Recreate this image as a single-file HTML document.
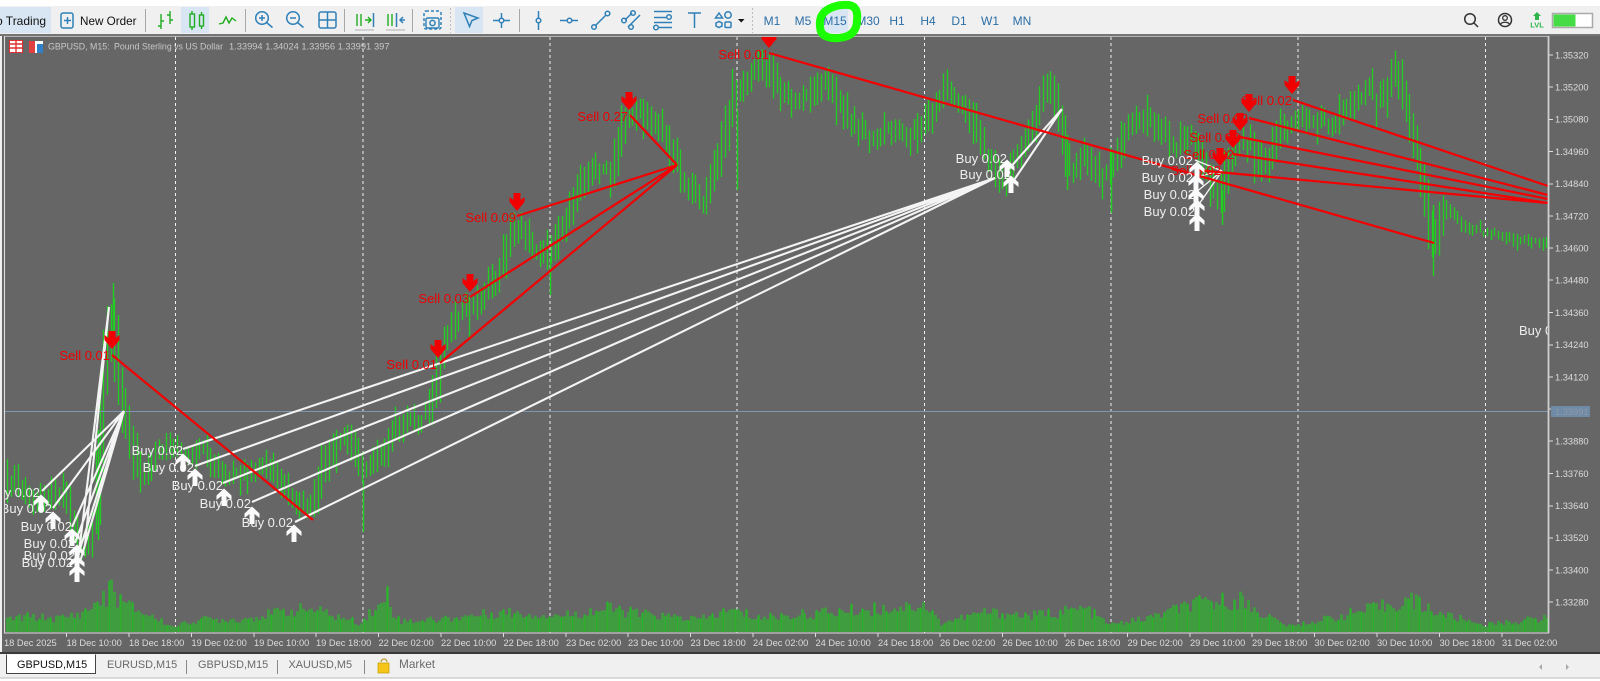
<!DOCTYPE html>
<html><head><meta charset="utf-8"><title>MT5 GBPUSD M15</title>
<style>
html,body{margin:0;padding:0;background:#fff;width:1600px;height:681px;overflow:hidden}
svg{display:block;position:absolute;left:0;top:0}
text{font-family:"Liberation Sans",sans-serif}
.tb{font-size:11.700px;fill:#111}
.tf{font-size:12px;fill:#2c6ea6;text-anchor:middle}
.ax{font-size:9.300px;fill:#dcdcdc}
.hd{font-size:8.800px;fill:#c8c8c8}
.s{font-size:13px;fill:#f00000;text-anchor:end}
.b{font-size:13px;fill:#eeeeee;text-anchor:end}
.tab{font-size:10.900px;fill:#6a6a6a}
.i{fill:none;stroke:#2f80b8;stroke-width:1.5}
.g{fill:none;stroke:#20ad20;stroke-width:1.4}
.w{fill:none;stroke:#f4f4f4;stroke-width:2.100}
.r{fill:none;stroke:#f40000;stroke-width:2.200}
</style></head><body>
<svg width="1600" height="681" viewBox="0 0 1600 681" xmlns="http://www.w3.org/2000/svg">
<defs>
<clipPath id="c"><rect x="5" y="37" width="1543" height="596"/></clipPath>
<path id="ad" fill="#f00000" d="M-3.500-9H3.500V-2L7.500-5V0L0 9-7.500 0V-5L-3.500-2Z"/>
<path id="au" fill="#fafafa" d="M-2.500 9H2.500V-1L7.500 3V-1.500L0-8.500-7.500-1.500V3L-2.500-1Z"/>
</defs>
<rect width="1600" height="681" fill="#fff"/>
<rect y="6" width="1600" height="28" fill="#f0f0f0"/>
<rect x="0" y="34" width="1600" height="620" fill="#666"/>
<rect x="0" y="34" width="2" height="620" fill="#f0f0f0"/>
<rect y="34" width="1600" height="2" fill="#757575"/>
<rect y="654" width="1600" height="24" fill="#f0f0f0"/>
<rect y="652" width="1600" height="2" fill="#3a3a3a"/>
<rect y="677.500" width="1600" height="1" fill="#bbb"/>

<!-- toolbar -->
<rect x="0" y="7" width="51" height="26" fill="#d8e6f3"/>
<text x="-22" y="25" class="tb" style="font-size:12px">Auto Trading</text>
<rect x="61" y="13" width="12" height="15" rx="2" class="i"/>
<path d="M64 20.500h7M67.500 17v7" class="i" stroke-width="1.300"/>
<text x="80" y="25" class="tb">New Order</text>
<path d="M145.500 9v23M245.500 9v23M344.500 9v23M412.500 9v23M519.500 9v23" stroke="#a8a8a8"/>
<path d="M450.500 8v25M752.500 8v25" stroke="#bbb" stroke-dasharray="2 2"/>

<path d="M161 14v15M158 26h3M161 21h3M170 11v13M167 15h3M170 20h3" class="g"/>
<rect x="181" y="7" width="28" height="26" fill="#d8e6f3"/>
<path d="M192 11v3M192 27v3M201.500 12v3M201.500 26v3" class="g"/>
<rect x="190" y="14" width="4.500" height="13" class="g"/><rect x="199.500" y="15" width="4" height="11" class="g"/>
<path d="M219 24l4-1 3-6 3 6 3-5 4 3" class="g"/>
<circle cx="262" cy="18" r="6.300" class="i"/><path d="M266.500 22.500l6 5M259 18h6M262 15v6" class="i"/>
<circle cx="293" cy="18" r="6.300" class="i"/><path d="M297.500 22.500l6 5M290 18h6" class="i"/>
<rect x="319" y="12" width="17" height="16" rx="2" class="i" stroke-width="1.800"/><path d="M327.500 12v16M319 20h17" class="i" stroke-width="1.800"/>
<path d="M357 14v12M361 14v12" class="g" stroke-width="2.400"/><path d="M365 20h5M368 17l3 3-3 3" class="g"/><path d="M373.500 13v14" stroke="#2f80b8" stroke-width="1.500"/><path d="M355 30h19" stroke="#b0b0b0"/>
<path d="M388 14v12M392 14v12" class="g" stroke-width="2.400"/><path d="M396.500 13v14" stroke="#2f80b8" stroke-width="1.500"/><path d="M405 20h-5M403 17l-3 3 3 3" class="i"/><path d="M386 30h19" stroke="#b0b0b0"/>
<rect x="424" y="11" width="17" height="18" rx="2" fill="none" stroke="#2f80b8" stroke-width="1.500" stroke-dasharray="3 2"/>
<rect x="426" y="18" width="13" height="10" rx="1.500" fill="#f0f0f0" stroke="#2f80b8" stroke-width="1.400"/><circle cx="432.500" cy="23" r="2.600" class="i"/>
<rect x="455" y="7" width="28" height="26" fill="#d8e6f3"/>
<path d="M464 13l14 5-6 2.500-2.500 6z" class="i" stroke-width="1.600"/>
<circle cx="501.500" cy="20.500" r="2.300" class="i"/><path d="M493 20.500h6M504 20.500h6M501.500 13v5M501.500 23v5" class="i"/>
<path d="M538.500 11v7M538.500 23v7" class="i"/><circle cx="538.500" cy="20.500" r="2.300" class="i"/>
<path d="M560 20.500h7M572 20.500h6" class="i"/><circle cx="569.500" cy="20.500" r="2.300" class="i"/>
<path d="M595 26l11-11" class="i"/><circle cx="594" cy="27" r="2.300" class="i"/><circle cx="607.500" cy="13.500" r="2.300" class="i"/>
<path d="M625 20l7-7M628 27l12-12" class="i"/><circle cx="624" cy="20.500" r="2.300" class="i"/><circle cx="633" cy="13" r="2.300" class="i"/><circle cx="631" cy="27" r="2.300" class="i"/>
<path d="M654 11.500h18M654 17.500h12M654 22.500h18M659 27.500h13" class="i"/><circle cx="669" cy="17" r="2.300" class="i"/><circle cx="656" cy="27.500" r="2.300" class="i"/>
<path d="M688 13h13M694.500 13v15" class="i"/>
<path d="M719 13l3.500 5h-7z" class="i" stroke-width="1.200"/><circle cx="728" cy="15" r="3.200" class="i" stroke-width="1.200"/><path d="M716 23l3-1.500 3 1.500v3l-3 1.500-3-1.500z" class="i" stroke-width="1.200"/><rect x="725" y="22" width="6" height="5.500" rx="1" class="i" stroke-width="1.200"/>
<path d="M738 19h6.500l-3.200 3.500z" fill="#111"/>

<rect x="821" y="7" width="27" height="26" fill="#d8e6f3"/>
<text x="772" y="25" class="tf">M1</text><text x="803" y="25" class="tf">M5</text><text x="835" y="25" class="tf">M15</text><text x="868" y="25" class="tf">M30</text><text x="897" y="25" class="tf">H1</text><text x="928" y="25" class="tf">H4</text><text x="959" y="25" class="tf">D1</text><text x="990" y="25" class="tf">W1</text><text x="1022" y="25" class="tf">MN</text>

<!-- right icons -->
<circle cx="1470" cy="19" r="5.300" fill="none" stroke="#333" stroke-width="1.500"/><path d="M1474 23l4 4" stroke="#333" stroke-width="1.500"/>
<circle cx="1505" cy="20" r="6.500" fill="none" stroke="#333" stroke-width="1.500"/><circle cx="1505" cy="18" r="2.300" fill="none" stroke="#333" stroke-width="1.300"/><path d="M1500.500 24.500c1-3 8-3 9 0" fill="none" stroke="#333" stroke-width="1.300"/>
<path d="M1537 12l4 4h-2v4h-4v-4h-2z" fill="#2fb54a"/>
<text x="1537" y="27.500" text-anchor="middle" style="font-size:7.500px;font-weight:bold;fill:#2fb54a">LVL</text>
<rect x="1552.500" y="13.500" width="40" height="14" fill="#fff" stroke="#aaa" stroke-width="1.500"/>
<rect x="1553.500" y="14.500" width="22" height="12" fill="#46dc46"/>

<!-- chart -->
<path d="M175.500 37V633M363 37V633M550 37V633M737 37V633M924.500 37V633M1111 37V633M1298 37V633M1485.500 37V633" stroke="#f2f2f2" stroke-width="1" stroke-dasharray="3 3"/>
<g clip-path="url(#c)">
<path id="vol" fill="none" stroke="#3f9c3f" stroke-width="3"/>
<path id="vol2" fill="none" stroke="#28b428" stroke-width="1"/>
<path id="bars" fill="none" stroke="#20d020" stroke-width="1.300"/>
<path d="M363.500 480V532M550.500 257V295M737.500 110V190M1067.500 135V190M1111.500 150V213M1222.500 190V225M1433.500 205V276M113.500 283V340M98.500 430V540" fill="none" stroke="#20d020" stroke-width="1.400"/>
<path d="M5 411.500H1548" stroke="#7f97ad"/>

<path class="w" d="M42 491L124 411M53 508L124 411M72 527L124 411M75 543L124 411M78 555L124 411M80 562L124 411M109 307L78 560M109 307L85 545"/>
<path class="w" d="M183 449L995 178M195 466L995 178M223 483L995 178M252 502L995 178M295 522L995 178M1008 170L1062 109M1012 183L1062 109"/>
<path class="w" style="stroke-width:1.400" d="M1195 160L1222 171M1195 177L1222 171M1195 193L1222 171M1197 207L1222 171"/>
<path class="r" d="M112 355L313 520M630 115L677 165M517 216L677 165M470 297L677 165M440 363L677 165M769 53L1434 243M1293 100L1548 186M1249 118L1548 195M1240 137L1548 199M1233 154L1548 203M1196 170L1548 203"/>

<text x="110" y="360" class="s">Sell 0.01</text>
<text x="628" y="121" class="s">Sell 0.27</text>
<text x="516" y="222" class="s">Sell 0.09</text>
<text x="469" y="303" class="s">Sell 0.03</text>
<text x="437" y="369" class="s">Sell 0.01</text>
<text x="769" y="59" class="s">Sell 0.01</text>
<text x="1292" y="105" class="s">Sell 0.02</text>
<text x="1248" y="123" class="s">Sell 0.02</text>
<text x="1240" y="142" class="s">Sell 0.02</text>
<text x="1234" y="159" class="s">Sell 0.02</text>
<text x="1221" y="175" class="s">Sell 0.02</text>

<use href="#ad" x="112" y="340"/><use href="#ad" x="629" y="101"/><use href="#ad" x="517" y="202"/><use href="#ad" x="470" y="283"/><use href="#ad" x="438" y="349"/><use href="#ad" x="769" y="39"/><use href="#ad" x="1292" y="85"/><use href="#ad" x="1249" y="103"/><use href="#ad" x="1240" y="122"/><use href="#ad" x="1233" y="139"/><use href="#ad" x="1220" y="157"/>

<text x="40" y="497" class="b">Buy 0.02</text>
<text x="52" y="513" class="b">Buy 0.02</text>
<text x="72" y="531" class="b">Buy 0.02</text>
<text x="75" y="548" class="b">Buy 0.02</text>
<text x="75" y="560" class="b">Buy 0.02</text>
<text x="73" y="567" class="b">Buy 0.02</text>
<text x="183" y="455" class="b">Buy 0.02</text>
<text x="194" y="472" class="b">Buy 0.02</text>
<text x="223" y="490" class="b">Buy 0.02</text>
<text x="251" y="508" class="b">Buy 0.02</text>
<text x="293" y="527" class="b">Buy 0.02</text>
<text x="1007" y="163" class="b">Buy 0.02</text>
<text x="1011" y="179" class="b">Buy 0.02</text>
<text x="1193" y="165" class="b">Buy 0.02</text>
<text x="1193" y="182" class="b">Buy 0.02</text>
<text x="1195" y="199" class="b">Buy 0.02</text>
<text x="1195" y="216" class="b">Buy 0.02</text>
<text x="1519" y="335" style="font-size:13px;fill:#eee">Buy 0.02</text>

<use href="#au" x="41" y="503"/><use href="#au" x="53" y="520"/><use href="#au" x="72" y="537"/><use href="#au" x="77" y="553"/><use href="#au" x="77" y="564"/><use href="#au" x="77" y="573"/><use href="#au" x="183" y="462"/><use href="#au" x="195" y="477"/><use href="#au" x="224" y="497"/><use href="#au" x="252" y="515"/><use href="#au" x="294" y="533"/><use href="#au" x="1007" y="168"/><use href="#au" x="1011" y="184"/><use href="#au" x="1197" y="170"/><use href="#au" x="1196" y="183"/><use href="#au" x="1196" y="197"/><use href="#au" x="1197" y="208"/><use href="#au" x="1197" y="222"/>
</g>

<!-- frame -->
<path d="M4 36.500H1549" stroke="#b4b4b4"/>
<path d="M4.500 36V633H1549" fill="none" stroke="#dcdcdc" stroke-width="1.100"/>
<path d="M1548.500 36V633" stroke="#d0d0d0" stroke-width="1.800"/>

<!-- chart header -->
<rect x="9.500" y="40.500" width="13" height="12" fill="#fff" stroke="#e03030"/><path d="M10 44h12M10 48h12M16 41v11" stroke="#e03030" stroke-width="1.400"/>
<path d="M29 41h14v12H29z" fill="#fff"/><path d="M29 41h6v12H29z" fill="#e04040"/><path d="M37 44h6v9h-6z" fill="#2f80c8"/>
<text x="48" y="49.500" class="hd">GBPUSD, M15:</text>
<text x="114" y="49.500" class="hd">Pound Sterling vs US Dollar</text>
<text x="229" y="49.500" class="ax" style="fill:#c8c8c8">1.33994 1.34024 1.33956 1.33991</text>
<text x="374" y="49.500" class="ax" style="fill:#c8c8c8">397</text>

<!-- price axis -->
<path d="M1549 55h4M1549 87h4M1549 119.500h4M1549 151.500h4M1549 184h4M1549 216h4M1549 248h4M1549 280h4M1549 312.500h4M1549 345h4M1549 377h4M1549 409h4M1549 441h4M1549 473.500h4M1549 506h4M1549 538h4M1549 570h4M1549 602h4" stroke="#ddd"/>
<text x="1555" y="58.500" class="ax">1.35320</text><text x="1555" y="90.500" class="ax">1.35200</text><text x="1555" y="122.500" class="ax">1.35080</text><text x="1555" y="155" class="ax">1.34960</text><text x="1555" y="187" class="ax">1.34840</text><text x="1555" y="219.500" class="ax">1.34720</text><text x="1555" y="251.500" class="ax">1.34600</text><text x="1555" y="283.500" class="ax">1.34480</text><text x="1555" y="316" class="ax">1.34360</text><text x="1555" y="348" class="ax">1.34240</text><text x="1555" y="380.500" class="ax">1.34120</text><text x="1555" y="444.500" class="ax">1.33880</text><text x="1555" y="477" class="ax">1.33760</text><text x="1555" y="509" class="ax">1.33640</text><text x="1555" y="541" class="ax">1.33520</text><text x="1555" y="573.500" class="ax">1.33400</text><text x="1555" y="605.500" class="ax">1.33280</text>
<rect x="1551" y="406" width="39" height="11" fill="#6f8aa6"/>
<text x="1555" y="415" class="ax" style="fill:#8f9aa5">1.33991</text>

<!-- time axis -->
<path d="M66.500 633v4M129 633v4M191.500 633v4M254 633v4M316 633v4M378.500 633v4M441 633v4M503.500 633v4M566 633v4M628 633v4M690.500 633v4M753 633v4M815.500 633v4M878 633v4M940 633v4M1002.500 633v4M1065 633v4M1127.500 633v4M1190 633v4M1252 633v4M1314.500 633v4M1377 633v4M1439.500 633v4M1502 633v4" stroke="#ddd"/>
<text x="4" y="646" class="ax">18 Dec 2025</text>
<text x="66.500" y="646" class="ax">18 Dec 10:00</text>
<text x="129" y="646" class="ax">18 Dec 18:00</text>
<text x="191.500" y="646" class="ax">19 Dec 02:00</text>
<text x="254" y="646" class="ax">19 Dec 10:00</text>
<text x="316" y="646" class="ax">19 Dec 18:00</text>
<text x="378.500" y="646" class="ax">22 Dec 02:00</text>
<text x="441" y="646" class="ax">22 Dec 10:00</text>
<text x="503.500" y="646" class="ax">22 Dec 18:00</text>
<text x="566" y="646" class="ax">23 Dec 02:00</text>
<text x="628" y="646" class="ax">23 Dec 10:00</text>
<text x="690.500" y="646" class="ax">23 Dec 18:00</text>
<text x="753" y="646" class="ax">24 Dec 02:00</text>
<text x="815.500" y="646" class="ax">24 Dec 10:00</text>
<text x="878" y="646" class="ax">24 Dec 18:00</text>
<text x="940" y="646" class="ax">26 Dec 02:00</text>
<text x="1002.500" y="646" class="ax">26 Dec 10:00</text>
<text x="1065" y="646" class="ax">26 Dec 18:00</text>
<text x="1127.500" y="646" class="ax">29 Dec 02:00</text>
<text x="1190" y="646" class="ax">29 Dec 10:00</text>
<text x="1252" y="646" class="ax">29 Dec 18:00</text>
<text x="1314.500" y="646" class="ax">30 Dec 02:00</text>
<text x="1377" y="646" class="ax">30 Dec 10:00</text>
<text x="1439.500" y="646" class="ax">30 Dec 18:00</text>
<text x="1502" y="646" class="ax">31 Dec 02:00</text>

<!-- tabs -->
<path d="M6.500 654.500V673.500H95.500V654.500" fill="#fff" stroke="#444"/>
<text x="17" y="668" style="font-size:10.900px;fill:#111">GBPUSD,M15</text>
<text x="107" y="668" class="tab">EURUSD,M15</text>
<path d="M186.500 660v14M277.500 660v14M364.500 660v14" stroke="#888"/>
<text x="198" y="668" class="tab">GBPUSD,M15</text>
<text x="288.500" y="668" class="tab">XAUUSD,M5</text>
<path d="M381 662a3 3 0 0 1 6 0" fill="none" stroke="#b08a00"/>
<rect x="378" y="663" width="11" height="10" fill="#f5c518" stroke="#c59a00" stroke-width=".7"/>
<text x="399" y="668" class="tab" style="font-size:11.800px">Market</text>
<path d="M1542 664l-3 3 3 3zM1566 664l3 3-3 3z" fill="#aaa"/>

<!-- hand-drawn green circle -->
<path d="M821 17C825 8 838 4 849 5C856 6 858 12 857 20C857 30 852 36 842 37.500C832 39.500 822 37 820.500 30C819.500 25 819.500 21 821 17Z" fill="none" stroke="#1cff00" stroke-width="8" stroke-linejoin="round"/>
</svg>
<script>
(function(){
var S=1600/1568;
var k=[5,480,10,465,20,480,40,490,60,480,75,520,85,540,95,500,100,400,105,320,110,295,115,360,122,400,130,440,140,470,150,450,165,435,180,445,200,440,215,460,240,470,260,450,275,470,290,490,305,505,320,440,340,430,360,460,375,440,395,415,420,405,428,370,435,340,450,310,470,290,490,270,505,215,520,240,540,250,560,200,580,165,600,165,612,120,625,105,640,115,655,140,670,175,690,200,705,150,720,90,735,75,752,60,770,95,790,100,810,75,830,115,850,135,880,130,900,130,925,90,945,100,960,135,980,180,1000,150,1015,120,1027,75,1040,120,1048,170,1065,150,1085,175,1105,125,1130,115,1150,145,1170,140,1195,200,1205,150,1225,140,1240,170,1255,125,1280,115,1310,120,1335,90,1355,100,1368,65,1385,130,1395,180,1405,255,1415,200,1440,225,1470,230,1515,240];
function ip(a,x){for(var i=0;i<a.length-2;i+=2){if(x<=a[i+2]){var t=(x-a[i])/(a[i+2]-a[i]);return a[i+1]+t*(a[i+3]-a[i+1]);}}return a[a.length-1];}
function h(i){var v=Math.sin(i*12.9898)*43758.5453;return v-Math.floor(v);}
var v=[5,14,30,17,60,15,85,22,97,34,106,38,110,58,114,42,125,30,150,18,172,6,200,14,240,14,280,22,310,26,340,16,360,10,372,24,384,30,386,58,388,30,400,12,440,14,500,22,560,18,610,26,640,20,700,14,730,24,760,16,830,22,880,26,906,28,908,45,910,28,925,30,940,10,985,22,1030,18,1085,26,1110,8,1150,16,1190,30,1240,36,1262,20,1290,6,1340,18,1390,30,1410,36,1440,20,1485,8,1548,16];
var d='',m='',n='',i=0,x;
for(x=7;x<1548;x+=3.7){i++;
 var p=ip(k,x/S)*S,q=ip(k,(x-3.7)/S)*S,r=ip(k,(x+3.7)/S)*S;
 var a=(x>1450)?.42:(x>1420?.75:1);
 var c=p+(h(i+300)-.5)*10*a;
 var top=Math.min(p,q,r)+(c-p)-(3+h(i)*12)*a;
 var bot=Math.max(p,q,r)+(c-p)+(3+h(i+500)*12)*a;
 if(h(i+90)>.95)bot+=14*a;
 if(h(i+190)>.96)top-=10*a;
 var X=Math.round(x)+.5;
 d+='M'+X+' '+top.toFixed(1)+'V'+bot.toFixed(1);
}
i=0;
for(x=7;x<1548;x+=2.9){i++;
 var e=ip(v,x);
 var t=632-e*(.62+h(i+700)*.55);
 if(e>45)t=632-e;
 var Y=Math.round(x)+.5;
 m+='M'+Y+' 632V'+t.toFixed(1);
 if(i%4==0)n+='M'+Y+' 632V'+(t-1).toFixed(1);
}
document.getElementById('bars').setAttribute('d',d);
document.getElementById('vol').setAttribute('d',m);
document.getElementById('vol2').setAttribute('d',n);
})();
</script>
</body></html>
